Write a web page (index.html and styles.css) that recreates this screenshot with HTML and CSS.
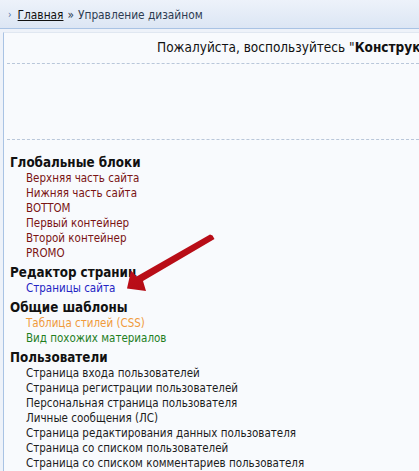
FILE: index.html
```html
<!DOCTYPE html>
<html lang="ru">
<head>
<meta charset="utf-8">
<title>Управление дизайном</title>
<link rel="stylesheet" href="styles.css">
</head>
<body>
<div class="topbar">
  <span class="chev">›</span>
  <a class="crumb" href="#">Главная</a>
  <span class="sep">»</span>
  <span class="current">Управление дизайном</span>
</div>
<div class="content">
  <div class="notice">Пожалуйста, воспользуйтесь "<b>Конструктором дизайна</b>"</div>
  <div class="banner"></div>
  <div class="groups">
    <div class="group">
      <div class="ghead">Глобальные блоки</div>
      <a class="item red" href="#">Верхняя часть сайта</a>
      <a class="item red" href="#">Нижняя часть сайта</a>
      <a class="item red" href="#">BOTTOM</a>
      <a class="item red" href="#">Первый контейнер</a>
      <a class="item red" href="#">Второй контейнер</a>
      <a class="item red" href="#">PROMO</a>
    </div>
    <div class="group">
      <div class="ghead">Редактор страниц</div>
      <a class="item blue" href="#">Страницы сайта</a>
    </div>
    <div class="group">
      <div class="ghead">Общие шаблоны</div>
      <a class="item orange" href="#">Таблица стилей (CSS)</a>
      <a class="item green" href="#">Вид похожих материалов</a>
    </div>
    <div class="group">
      <div class="ghead">Пользователи</div>
      <a class="item" href="#">Страница входа пользователей</a>
      <a class="item" href="#">Страница регистрации пользователей</a>
      <a class="item" href="#">Персональная страница пользователя</a>
      <a class="item" href="#">Личные сообщения (ЛС)</a>
      <a class="item" href="#">Страница редактирования данных пользователя</a>
      <a class="item" href="#">Страница со списком пользователей</a>
      <a class="item" href="#">Страница со списком комментариев пользователя</a>
    </div>
  </div>
</div>
<svg class="arrow" width="419" height="471" viewBox="0 0 419 471">
  <defs>
    <linearGradient id="ag" x1="0" y1="0" x2="1" y2="1">
      <stop offset="0" stop-color="#c8101c"/>
      <stop offset="1" stop-color="#a80a12"/>
    </linearGradient>
  </defs>
  <path d="M212.5 235.5 L214.5 239 L143 281 L146 291 L127 288.5 L131 270.5 L136.5 276.5 L210 234.5 Z" fill="url(#ag)"/>
</svg>
</body>
</html>
```

FILE: styles.css
```css
html, body {
  margin: 0;
  padding: 0;
}
body {
  width: 419px;
  height: 471px;
  overflow: hidden;
  background: #eef2f9;
  font-family: "DejaVu Sans Condensed", "DejaVu Sans", sans-serif;
  font-size: 11.5px;
  color: #111;
  position: relative;
}
.topbar {
  height: 29px;
  box-sizing: border-box;
  border-bottom: 1px solid #a9c3e4;
  background: linear-gradient(#edf2fa, #dce6f4);
  display: flex;
  align-items: center;
  padding-left: 8px;
  padding-top: 1px;
  gap: 4px;
  white-space: nowrap;
  font-size: 11.8px;
}
.chev {
  color: #4f6f9f;
  font-size: 10px;
  margin-right: 2px;
}
.crumb {
  color: #111;
  text-decoration: underline;
}
.sep, .current {
  color: #2d3c52;
}
.content {
  margin: 3px 0 0 3px;
  border-left: 1px solid #a9c3e4;
  border-top: 1px solid #e0e7f1;
  background: #f8fafd;
  min-height: 440px;
  padding: 0 0 0 3px;
}
.notice {
  white-space: nowrap;
  overflow: hidden;
  padding: 6px 0 0 150px;
  height: 30px;
  box-sizing: border-box;
  line-height: 16px;
  font-size: 13.5px;
}
.notice b {
  font-weight: bold;
}
.banner {
  height: 77px;
  border-top: 1px dashed #b9c7da;
  border-bottom: 1px dashed #b9c7da;
  box-sizing: border-box;
}
.groups {
  padding: 15px 0 0 3px;
  display: flex;
  flex-direction: column;
}
.group {
  display: flex;
  flex-direction: column;
  margin-bottom: 4px;
}
.ghead {
  font-weight: bold;
  font-size: 13.3px;
  line-height: 16px;
  color: #111;
}
.item {
  line-height: 15px;
  padding-left: 16px;
  color: #1c1c1c;
  text-decoration: none;
  white-space: nowrap;
}
.item.red { color: #7a1414; }
.item.blue { color: #2424c4; }
.item.orange { color: #f09a3c; }
.item.green { color: #1f7f1f; }
.arrow {
  position: absolute;
  left: 0;
  top: 0;
  pointer-events: none;
}
```
